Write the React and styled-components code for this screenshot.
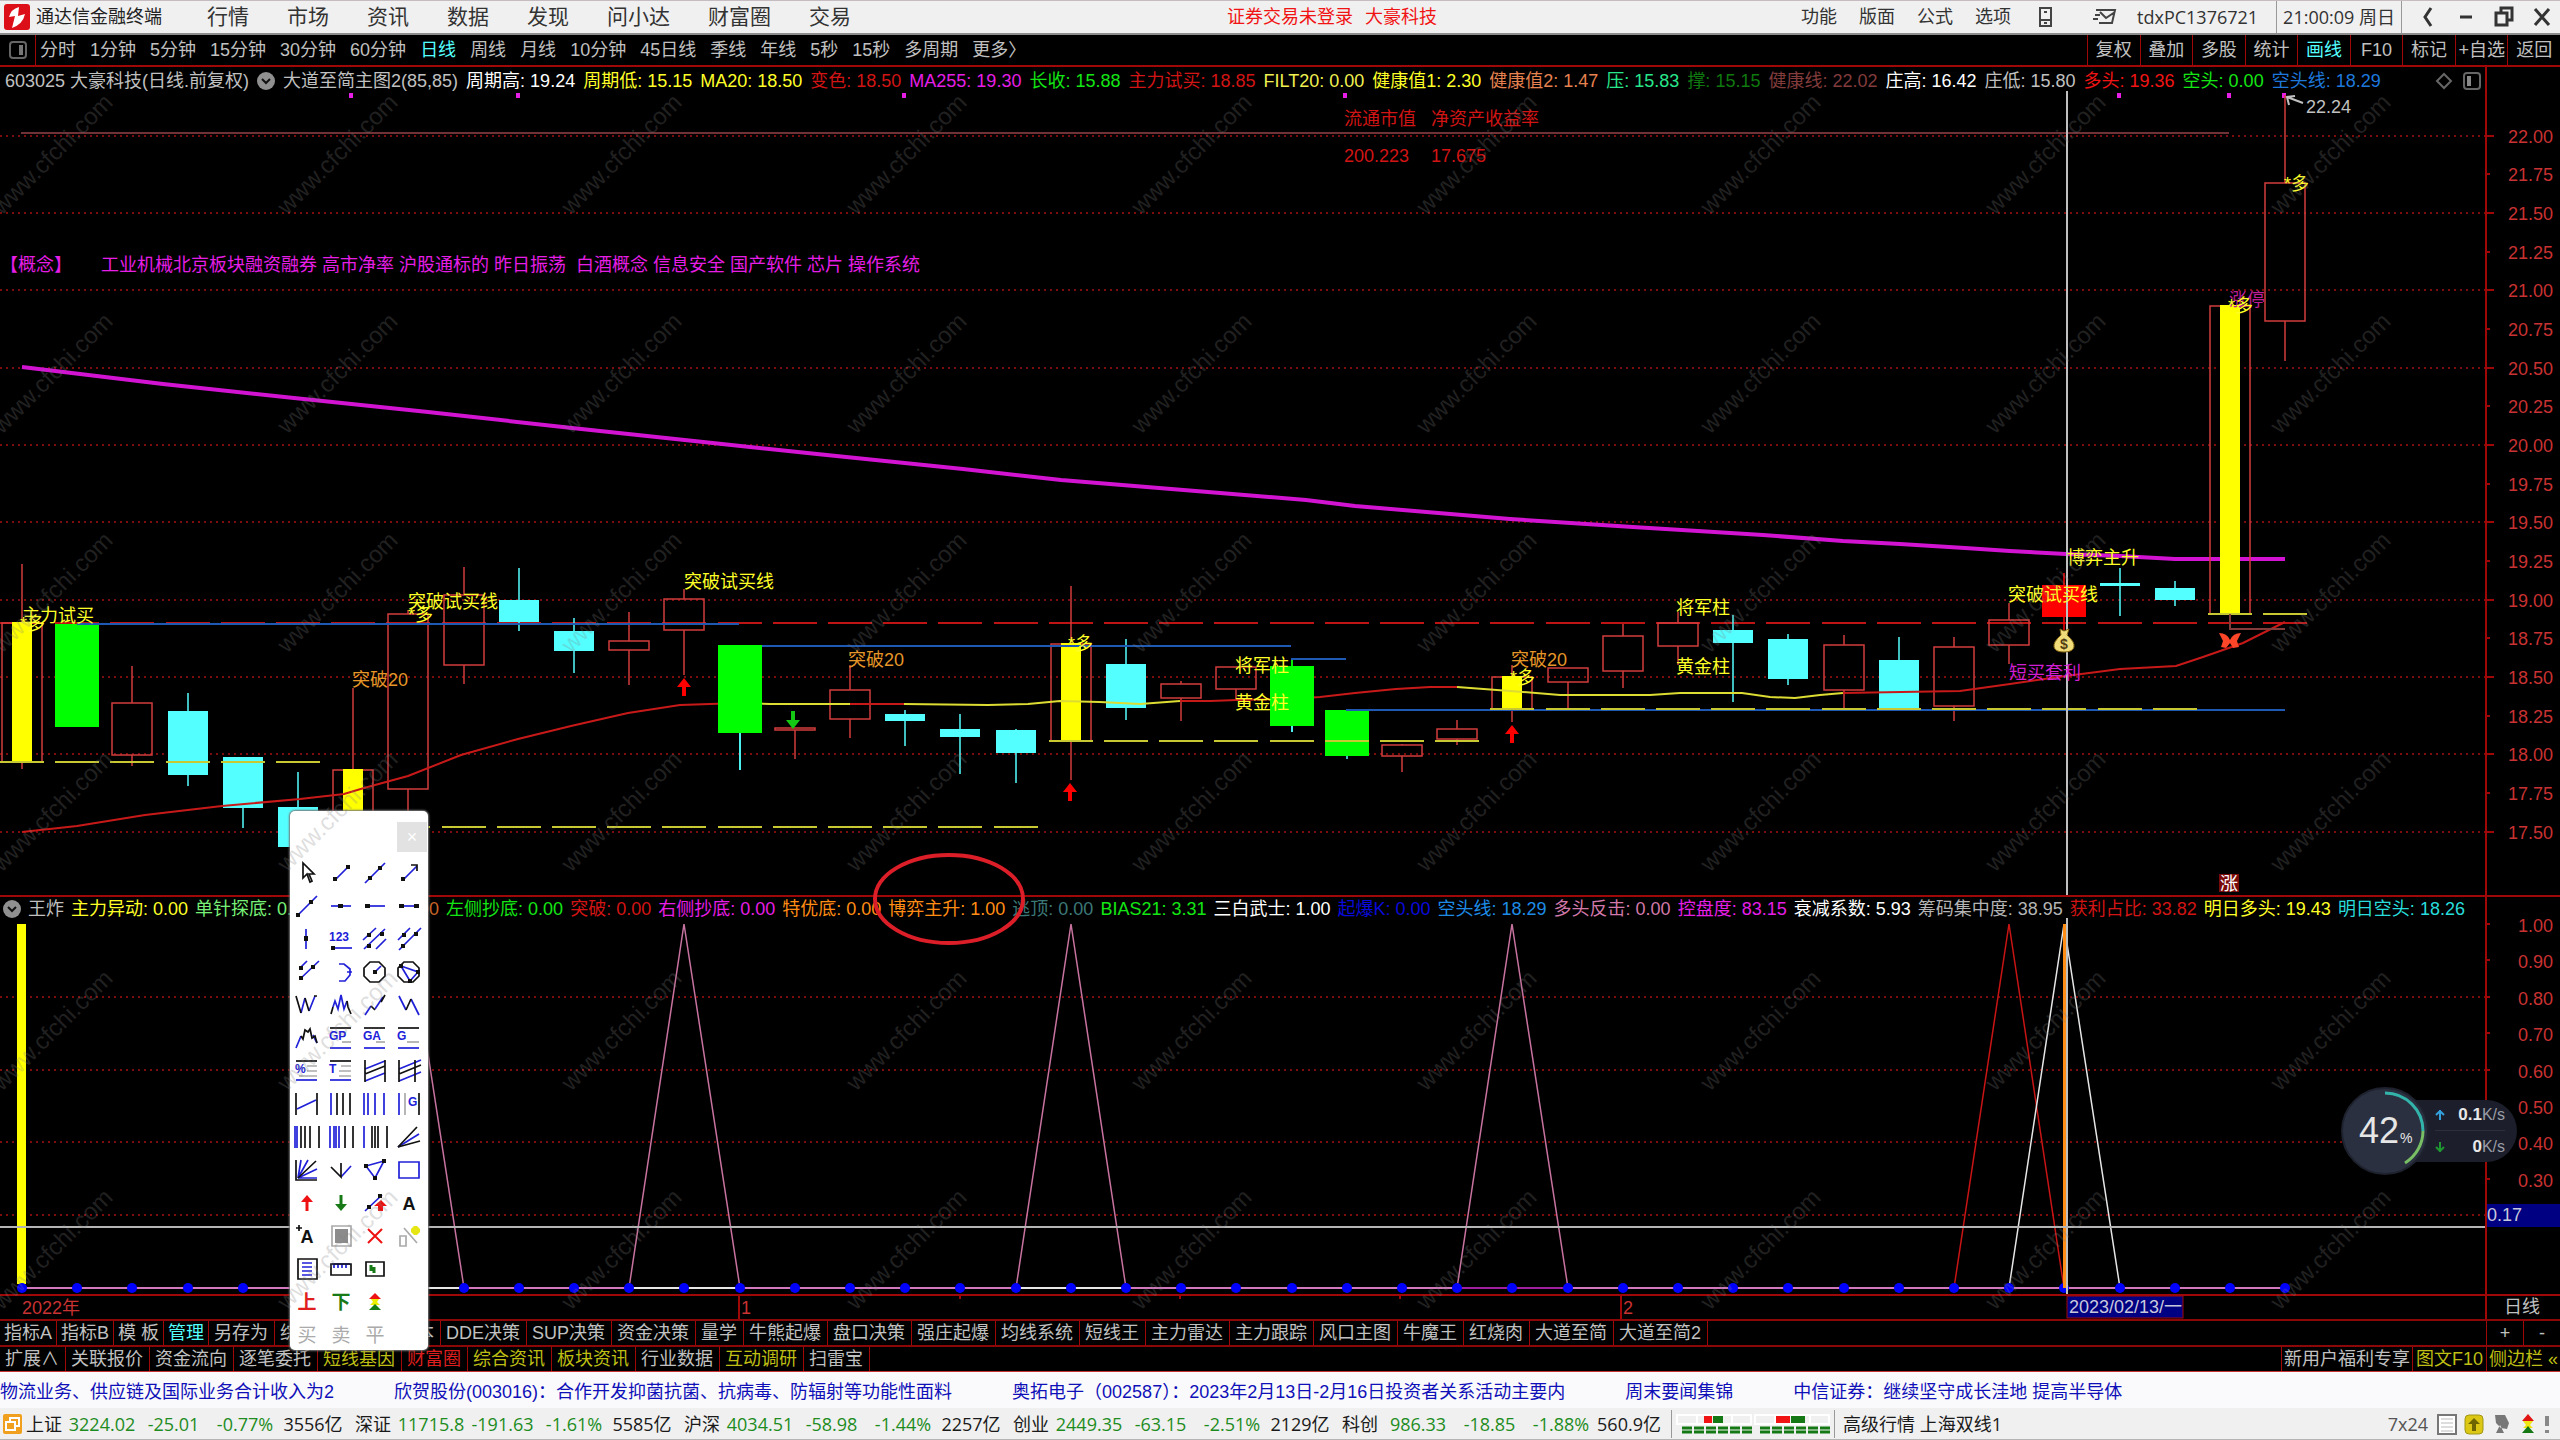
import { Fragment } from 'react';
import styled, { createGlobalStyle, css } from 'styled-components';

const GlobalStyle = createGlobalStyle`
  *, *::before, *::after {
    box-sizing: border-box;
  }

  body {
    margin: 0;
    background: #000;
    color: #c0c0c0;
    font-family: 'Liberation Sans', 'Noto Sans CJK SC', sans-serif;
    font-size: 18px;
    line-height: 24px;
  }

  button {
    padding: 0;
    border: 0;
    background: none;
    color: inherit;
    font: inherit;
    white-space: nowrap;
    cursor: pointer;
  }
`;

const Screen = styled.div`
  position: relative;
  display: flex;
  flex-direction: column;
  min-height: 100vh;
  overflow: hidden;
`;

/* ---------- title bar ---------- */

const TitleBar = styled.header`
  display: flex;
  align-items: center;
  justify-content: space-between;
  height: 35px;
  border-top: 1px solid #c4bcc0;
  border-bottom: 2px solid #8c8c8c;
  background: #f0f0f0;
  color: #333;
`;

const Brand = styled.div`
  display: flex;
  align-items: center;
  gap: 6px;
  width: 207px;
  padding-left: 4px;
  color: #222;
`;

const MainMenu = styled.nav`
  display: flex;
  align-items: center;
  gap: 38px;
  font-size: 21px;
`;

const TitleGroup = styled.div`
  display: flex;
  align-items: center;
  height: 100%;
`;

const LoginNotice = styled.div`
  display: flex;
  gap: 12px;
  padding-left: 12px;
  color: #f01414;
`;

const SystemMenu = styled.div`
  display: flex;
  align-items: center;
  gap: 22px;
`;

const Account = styled.span`
  display: flex;
  align-items: center;
  gap: 20px;
  padding: 0 18px 0 28px;
  font-family: 'Open Sans', 'Noto Sans CJK SC', sans-serif;
`;

const Clock = styled.time`
  height: 100%;
  padding: 4px 6px 0;
  border-left: 1px solid #999;
  border-right: 1px solid #999;
  font-family: 'Open Sans', 'Noto Sans CJK SC', sans-serif;
`;

const WindowButtons = styled.div`
  display: flex;
  align-items: center;
  gap: 18px;
  padding: 0 8px 0 16px;

  button {
    height: 24px;
  }

  svg {
    display: block;
  }
`;

/* ---------- toolbars ---------- */

const PeriodBar = styled.div`
  display: flex;
  justify-content: space-between;
  height: 32px;
  border-bottom: 2px solid #a00808;
`;

const Periods = styled.div`
  display: flex;
  align-items: center;
  gap: 14px;
`;

const LayoutButton = styled.button`
  display: flex;
  align-items: center;
  justify-content: center;
  width: 36px;
  height: 100%;
  margin-right: -10px;
  border-right: 1px solid #a00808;
`;

const TextButton = styled.button`
  color: ${({ $color }) => $color || 'inherit'};
`;

const Actions = styled.div`
  display: grid;
  grid-template-columns: repeat(9, 1fr);
  width: 473px;

  button {
    border-left: 1px solid #a00808;
  }
`;

/* ---------- indicator legends ---------- */

const Legend = styled.div`
  display: flex;
  height: ${({ $height }) => $height}px;
  border-top: ${({ $divider }) => ($divider ? '2px solid #a00808' : 0)};
`;

const LegendItems = styled.div`
  display: flex;
  flex: 1;
  align-items: center;
  gap: ${({ $gap }) => $gap}px;
  min-width: 0;
  padding-top: 3px;
  padding-left: ${({ $indent }) => $indent}px;
  white-space: pre;
`;

const LegendItem = styled.span`
  color: ${({ $color }) => $color};
  ${({ $slot }) =>
    $slot &&
    css`
      width: 120px;
      text-align: right;
    `}
`;

const LegendTools = styled.span`
  display: flex;
  align-items: center;
  gap: 10px;
  margin-left: auto;
  padding-right: 4px;
`;

const AxisCell = styled.div`
  width: 75px;
  border-left: 2px solid #a00808;
`;

const Chart = styled.svg`
  display: block;
  width: 100%;
  height: auto;
`;

/* ---------- tab rows ---------- */

const TabRow = styled.div`
  display: flex;
  justify-content: space-between;
  height: 26px;
  border-top: 2px solid #8c0808;
`;

const Tabs = styled.div`
  display: flex;
`;

const Tab = styled.button`
  padding: ${({ $tight }) => ($tight ? '0 4px' : '0 6px 0 5px')};
  border-right: 1px solid #a00808;
  color: ${({ $color }) => $color || '#c0c0c0'};
`;

const WideTab = styled(Tab)`
  display: flex;
  justify-content: space-between;
  width: 166px;
`;

const EdgeTab = styled(Tab)`
  min-width: ${({ $width }) => $width}px;
  padding: 0 2px;
  border-right: 0;
  border-left: 1px solid #a00808;
`;

/* ---------- news and status ---------- */

const News = styled.div`
  display: flex;
  gap: 60px;
  height: 37px;
  padding-top: 8px;
  overflow: hidden;
  border-top: 1px solid #c83232;
  background: #fafafc;
  white-space: pre;

  a {
    color: #1010b8;
    text-decoration: none;
  }
`;

const StatusBar = styled.footer`
  display: flex;
  flex: 1;
  align-items: center;
  min-height: 32px;
  padding-top: 1px;
  padding-left: 3px;
  border-bottom: 1px solid #b4b4b4;
  background: #f0f0f0;
  color: #1a1a1a;
  font-family: 'Open Sans', 'Noto Sans CJK SC', sans-serif;
`;

const Quote = styled.div`
  display: grid;
  grid-template-columns: 42px 68px 75px 68px 68px;
  margin-right: 8px;
  white-space: nowrap;
`;

const QuoteValue = styled.span`
  color: ${({ $plain }) => ($plain ? '#1a1a1a' : '#1e8c1e')};
  text-align: center;
`;

const Meters = styled.div`
  display: flex;
  align-items: center;
  height: 28px;
  padding: 0 4px;
  border-left: 1px solid #999;
  border-right: 1px solid #999;
`;

const Server = styled.span`
  padding-left: 8px;
`;

const Tray = styled.div`
  display: flex;
  align-items: center;
  gap: 8px;
  margin-left: auto;
  padding-right: 4px;
  color: #555;
`;

/* ---------- floating parts ---------- */

const Watermark = styled.svg`
  position: absolute;
  top: 67px;
  left: 0;
  width: 100%;
  height: 1260px;
  pointer-events: none;
`;

const Mark = styled.svg`
  position: absolute;
  top: 850px;
  left: 869px;
  pointer-events: none;
`;

const Palette = styled.section`
  position: absolute;
  top: 811px;
  left: 290px;
  width: 138px;
  height: 539px;
  border-radius: 5px;
  background: #fff;
  box-shadow: 0 0 2px 1px #777;
`;

const PaletteClose = styled.button`
  display: block;
  width: 30px;
  height: 30px;
  margin: 11px 1px 4px auto;
  background: #e2e2e2;
  color: #fff;
`;

const ToolGrid = styled.div`
  display: grid;
  grid-template-columns: repeat(4, 34px);
  grid-auto-rows: 33px;

  button {
    display: flex;
    align-items: center;
    justify-content: center;
  }
`;

const NetWidget = styled.div`
  position: absolute;
  top: 1087px;
  left: 2341px;
  display: flex;
  align-items: center;
`;

const Gauge = styled.div`
  position: relative;
  z-index: 1;
  width: 88px;
  height: 88px;
`;

const Rates = styled.div`
  width: 106px;
  height: 62px;
  margin-left: -18px;
  padding: 0 12px 0 24px;
  border-radius: 0 31px 31px 0;
  background: #1c1f2b;
`;

const Rate = styled.div`
  display: flex;
  align-items: center;
  justify-content: space-between;
  height: 31px;
  color: #e8e8e8;
  font-size: 17px;
  font-weight: bold;

  &:first-child {
    border-bottom: 1px solid #2c303c;
  }

  small {
    color: #9a9ca6;
    font-size: 16px;
    font-weight: normal;
  }
`;

const CYAN = '#54ffff';
const RED = '#c83232';
const MA_RED = '#c81919';
const FRAME = '#a00808';

const periods = ['分时', '1分钟', '5分钟', '15分钟', '30分钟', '60分钟', '日线', '周线', '月线', '10分钟', '45日线', '季线', '年线', '5秒', '15秒', '多周期', '更多〉'];
const actions = ['复权', '叠加', '多股', '统计', '画线', 'F10', '标记', '+自选', '返回'];

const mainLegend = [
  ['周期高: 19.24', '#fff'],
  ['周期低: 15.15', '#ffff28'],
  ['MA20: 18.50', '#ffff28'],
  ['变色: 18.50', '#d21414'],
  ['MA255: 19.30', '#e61ee6'],
  ['长收: 15.88', '#14e614'],
  ['主力试买: 18.85', '#d21414'],
  ['FILT20: 0.00', '#f0f050'],
  ['健康值1: 2.30', '#ffff28'],
  ['健康值2: 1.47', '#e68250'],
  ['压: 15.83', '#28e68c'],
  ['撑: 15.15', '#0f780f'],
  ['健康线: 22.02', '#823c3c'],
  ['庄高: 16.42', '#fff'],
  ['庄低: 15.80', '#c0c0c0'],
  ['多头: 19.36', '#f01414'],
  ['空头: 0.00', '#14e614'],
  ['空头线: 18.29', '#1e78dc'],
];

const subLegend = [
  ['王炸', '#c0c0c0'],
  ['主力异动: 0.00', '#ffff28'],
  ['单针探底: 0.00', '#78f078'],
  ['0.00', '#c86428', true],
  ['左侧抄底: 0.00', '#14e614'],
  ['突破: 0.00', '#d21414'],
  ['右侧抄底: 0.00', '#e61ee6'],
  ['特优底: 0.00', '#ff8c14'],
  ['博弈主升: 1.00', '#ff8c14'],
  ['逃顶: 0.00', '#3c7878'],
  ['BIAS21: 3.31', '#14e614'],
  ['三白武士: 1.00', '#fff'],
  ['起爆K: 0.00', '#0a0adc'],
  ['空头线: 18.29', '#1e8ce6'],
  ['多头反击: 0.00', '#d278aa'],
  ['控盘度: 83.15', '#e61ee6'],
  ['衰减系数: 5.93', '#fff'],
  ['筹码集中度: 38.95', '#b4b4b4'],
  ['获利占比: 33.82', '#d21414'],
  ['明日多头: 19.43', '#ffff28'],
  ['明日空头: 18.26', '#28dcdc'],
];

// kind, body top, body bottom, high, low
const candles = [
  ['y', 623, 762, 564, 769], ['g', 624, 727, 624, 727], ['h', 703, 755, 666, 766], ['c', 711, 775, 693, 786],
  ['c', 757, 808, 757, 828], ['c', 807, 847, 772, 847], ['y', 770, 880, 688, 890], ['h', 614, 789, 610, 830],
  ['h', 595, 665, 567, 684], ['c', 600, 622, 568, 631], ['c', 631, 651, 618, 673], ['h', 641, 650, 612, 685],
  ['h', 599, 630, 589, 675], ['g', 645, 733, 645, 770], ['h', 728, 730, 728, 759], ['h', 690, 719, 665, 738],
  ['c', 714, 721, 710, 746], ['c', 729, 737, 714, 774], ['c', 730, 753, 729, 783], ['y', 644, 741, 586, 780],
  ['c', 664, 708, 639, 720], ['h', 684, 698, 681, 721], ['h', 667, 689, 667, 700], ['g', 666, 726, 660, 732],
  ['g', 710, 756, 710, 759], ['h', 745, 756, 744, 772], ['h', 729, 739, 720, 745], ['y', 677, 709, 665, 722],
  ['h', 668, 682, 668, 708], ['h', 636, 671, 624, 688], ['h', 623, 646, 612, 665], ['c', 630, 643, 615, 702],
  ['c', 639, 679, 634, 685], ['h', 645, 690, 635, 708], ['c', 660, 709, 637, 709], ['h', 647, 706, 637, 721],
  ['h', 620, 645, 603, 664], ['r', 585, 617, 573, 630], ['c', 583, 586, 568, 616], ['c', 588, 600, 581, 606],
  ['y', 306, 614, 306, 628], ['h', 183, 321, 95, 361],
];

const colors = { c: CYAN, g: '#00ff00', r: '#ff0000', h: '#d23c3c', y: '#d23c3c' };
const candleX = (i) => Math.round(22 + 55.2 * i);
const priceY = (p) => Math.round(135.5 + (22 - p) * 154.7);
const levelY = (v) => Math.round(1288 - v * 364);

// level, first candle, last candle
const supports = [[762, 0, 5], [827, 7, 18], [741, 19, 26], [709, 27, 39], [614, 40, 41]];
const pressures = [[624, 77, 739], [646, 739, 1291], [659, 1291, 1346], [710, 1346, 2285]];

const labels = [
  ['主力试买', 22, 615], ['突破试买线', 408, 601], ['突破试买线', 684, 581], ['将军柱', 1235, 665],
  ['黄金柱', 1235, 702], ['将军柱', 1676, 607], ['黄金柱', 1676, 666], ['博弈主升', 2067, 557],
  ['突破试买线', 2008, 594], ['突破20', 352, 679, '#e69628'], ['突破20', 848, 659, '#e69628'],
  ['突破20', 1511, 659, '#e69628'], ['短买套利', 2009, 672, '#d21ed2'], ['涨停', 2229, 299, '#be1e96'],
  ['*多', 20, 623], ['*多', 408, 614], ['*多', 1068, 643], ['*多', 1510, 677], ['*多', 2228, 305], ['*多', 2284, 183],
  ['流通市值', 1344, 118, '#d21414'], ['净资产收益率', 1431, 118, '#d21414'],
  ['200.223', 1344, 155, '#d21414'], ['17.675', 1431, 155, '#d21414'], ['22.24', 2306, 106, '#c0c0c0'],
  ['【概念】', 0, 264, '#e61ee6'],
  ['工业机械北京板块融资融券 高市净率 沪股通标的 昨日振荡  白酒概念 信息安全 国产软件 芯片 操作系统', 101, 264, '#e61ee6'],
];

const ma255 = '22,367 163,384 294,398 428,412 572,428 694,441 817,454 963,469 1061,480 1208,492 1306,500 1355,506 1510,519 1633,527 1763,535 1843,541 1900,544 1965,548 2010,551 2066,554 2120,556 2175,559 2285,559';
const ma20 = [
  [MA_RED, '22,832 77,826 145,815 222,806 300,799 344,794 364,788 408,776 461,755 518,739 571,726 628,713 680,705 740,703'],
  ['#dcdc32', '740,703 770,704 850,704'],
  [MA_RED, '850,704 904,704'],
  ['#dcdc32', '904,704 988,705 1028,704 1060,701 1100,702 1140,704 1180,701'],
  [MA_RED, '1180,701 1210,701 1237,700 1290,699 1320,697 1355,693 1396,689 1430,687 1457,687'],
  ['#dcdc32', '1457,687 1510,691 1560,695 1650,695 1680,693 1742,693 1770,697 1795,698 1820,695 1843,693'],
  [MA_RED, '1843,693 1960,691 2010,684 2066,676 2120,669 2176,666 2203,657 2243,643 2285,622'],
];

const indicatorTabs = ['DDE决策', 'SUP决策', '资金决策', '量学', '牛熊起爆', '盘口决策', '强庄起爆', '均线系统', '短线王', '主力雷达', '主力跟踪', '风口主图', '牛魔王', '红烧肉', '大道至简', '大道至简2'];
const linkTabs = [
  ['扩展∧'], ['关联报价'], ['资金流向'], ['逐笔委托'], ['短线基因', '#bebe14'], ['财富圈', '#dc1e1e'],
  ['综合资讯', '#bebe14'], ['板块资讯', '#bebe14'], ['行业数据'], ['互动调研', '#bebe14'], ['扫雷宝'],
];

const news = [
  '物流业务、供应链及国际业务合计收入为2',
  '欣贺股份(003016)：合作开发抑菌抗菌、抗病毒、防辐射等功能性面料',
  '奥拓电子（002587）：2023年2月13日-2月16日投资者关系活动主要内',
  '周末要闻集锦',
  '中信证券：继续坚守成长洼地 提高半导体',
];

const quotes = [
  ['上证', '3224.02', '-25.01', '-0.77%', '3556亿'],
  ['深证', '11715.8', '-191.63', '-1.61%', '5585亿'],
  ['沪深', '4034.51', '-58.98', '-1.44%', '2257亿'],
  ['创业', '2449.35', '-63.15', '-2.51%', '2129亿'],
  ['科创', '986.33', '-18.85', '-1.88%', '560.9亿'],
];

// Drawing tools: k black, b blue, g gray, r red, n green strokes; dots are the anchor points
const tools = [
  { name: '选择', k: 'M8 2v15l4-4 3 8 2-1-3-7h5z' },
  { name: '线段', b: 'M6 19L19 6', dots: [[6, 18], [19, 6]] },
  { name: '直线', b: 'M2 22L22 2', dots: [[7, 17], [17, 7]] },
  { name: '箭头', b: 'M6 19L20 5', k: 'M14 4h6v6', dots: [[6, 18]] },
  { name: '射线', b: 'M2 22L22 2', dots: [[3, 21], [16, 8]] },
  { name: '水平直线', b: 'M2 12h20', dots: [[12, 12], [11, 12]] },
  { name: '水平射线', b: 'M4 12h18', dots: [[4, 12], [5, 12]] },
  { name: '水平线段', b: 'M4 12h16', dots: [[4, 12], [5, 12], [20, 12], [19, 12]] },
  { name: '垂直线', b: 'M11 2v20', dots: [[11, 12], [11, 11]] },
  { name: '价格标注', b: 'M3 21h20', text: '123', dots: [[4, 21]] },
  { name: '平行线', b: 'M0 13L13 1M1 22L22 2M13 22L23 12', dots: [[6, 8], [19, 7], [6, 19]] },
  { name: '平行直线', b: 'M1 13L13 1M2 23L24 1', dots: [[7, 8], [19, 7], [6, 19]] },
  { name: '平行射线', b: 'M5 8L12 1M5 19L24 1', dots: [[6, 8], [18, 7], [6, 18]] },
  { name: '圆弧', b: 'M10 4h5l6 5v6l-5 6h-6M18 12h5' },
  { name: '圆', k: 'M7 2h9l6 6v8l-6 6H7l-6-6V8z', b: 'M12 12l6-6', dots: [[12, 12]] },
  { name: '外接圆', k: 'M7 2h9l6 6v8l-6 6H7l-6-6V8z', b: 'M4 6l17 6-8 9z', dots: [[4, 6], [21, 12], [13, 21]] },
  { name: 'W底', b: 'M6 20L10 5M14 18L20 3', k: 'M1 3l5 17M10 5l4 13M19 3h3' },
  { name: '头肩', b: 'M4 14l2-6 3 8 3-14 3 14 3-8', k: 'M2 21l2-7M18 8l1 6 3 7' },
  { name: '波浪', b: 'M2 22l6-9M12 16l8-12', k: 'M8 13l4 4M18 9l4-7' },
  { name: '三浪', b: 'M2 3l7 14M14 6l8 16', k: 'M9 17l5-11' },
  { name: '八浪', b: 'M1 22l5-12M18 9l4 8', k: 'M6 10l2 3 2-9 3 2 2-3 2 9 3-2 2 7' },
  { name: '黄金价位', k: 'M1 2h21', g: 'M13 16h9', b: 'M1 22h21', text: 'GP' },
  { name: '黄金目标', k: 'M1 2h21', g: 'M13 16h9', b: 'M1 22h21', text: 'GA' },
  { name: '黄金分割', k: 'M1 2h21', g: 'M10 16h12', b: 'M1 22h21', text: 'G' },
  { name: '百分比', k: 'M1 2h21', g: 'M12 7h10M12 12h10M4 17h18', b: 'M1 21h21', text: '%' },
  { name: '波段线', k: 'M1 2h21', g: 'M12 7h10M10 12h12M10 17h12', b: 'M1 21h21', text: 'T' },
  { name: '线性回归带', k: 'M2 1v22M22 1v22M2 15L22 7', b: 'M2 10L22 2M2 22l20-8' },
  { name: '延长回归带', k: 'M2 1v22M18 1v22M2 15L24 6', b: 'M2 10L24 1M2 22l22-9' },
  { name: '回归线', k: 'M1 1v22M22 1v22', b: 'M2 17L21 8' },
  { name: '周期线', b: 'M2 1v22', k: 'M8 1v22M14 1v22M21 1v22' },
  { name: '斐波周期', b: 'M1 1v22M5 1v22M12 1v22M21 1v22' },
  { name: '江恩时间', b: 'M2 1v22', g: 'M8 1v22', k: 'M22 1v22', text: 'G', shift: 11 },
  { name: '阻速周期', b: 'M0 1v22M2 1v22', k: 'M6 1v22M10 1v22M15 1v22M24 1v22' },
  { name: '对称周期', b: 'M1 1v22M5 1v22M7 1v22M10 1v22', k: 'M16 1v22M24 1v22' },
  { name: '混合周期', b: 'M1 1v22', k: 'M9 1v22M12 1v22M15 1v22M24 1v22' },
  { name: '阻速线', b: 'M1 22L22 9', k: 'M1 22L20 2M1 22l22-6' },
  { name: '江恩角度', b: 'M3 20L6 2M3 20L13 2M3 20l19-9M3 20h19', k: 'M1 2v20h21M3 20L21 3' },
  { name: '三叉线', k: 'M2 9l10 10V5', b: 'M12 19L22 8' },
  { name: '三角形', b: 'M3 8l18-5-9 17z', dots: [[3, 8], [21, 3], [12, 20]] },
  { name: '矩形', b: 'M2 4h20v16H2z' },
  { name: '上箭头', r: 'M12 9v11', fill: ['#e11', 'M12 4l6 7H6z'] },
  { name: '下箭头', n: 'M12 4v11', fill: ['#177a17', 'M12 20l6-7H6z'] },
  { name: '涨跌线', b: 'M2 20L19 4', dots: [[6, 16], [17, 5]], fill: ['#e11', 'M11 15l7-6 6 6h-4v5h-5v-5z'] },
  { name: '文字', glyph: 'A' },
  { name: '加文字', glyph: 'A', k: 'M1 4h6M4 1v6' },
  { name: '隐藏', g: 'M3 2h19v20H3z', fill: ['#8c8c8c', 'M6 5h13v14H6z'] },
  { name: '删除', x: 'M5 5l14 14M19 5L5 19' },
  { name: '属性', g: 'M3 12h6v10H3zM7 4l13 15', fill: ['#e6e614', 'M14 5l3-3h3l3 3v3l-3 3h-3l-3-3z'] },
  { name: '列表', k: 'M3 2h19v20H3z', b: 'M7 6h10M7 10h10M7 14h10M7 18h10' },
  { name: '测距', k: 'M2 7h20v11H2z', b: 'M3 7h18M5 7v4M9 7v4M13 7v4M17 7v4' },
  { name: '画面', k: 'M3 5h18v14H3z', n: 'M8 8v6M11 10v6' },
  null,
  { name: '上', glyph: '上', ink: '#e11e1e', bold: true },
  { name: '下', glyph: '下', ink: '#177a17', bold: true },
  { name: '红绿灯', fill: ['#e11', 'M12 3l6 6H6z'], fill2: ['#ee0', 'M8 9h8l-2 3 3 3H7l3-3z'], fill3: ['#177a17', 'M12 14l6 6H6z'] },
  null,
  { name: '买', glyph: '买', ink: '#aaa' },
  { name: '卖', glyph: '卖', ink: '#aaa' },
  { name: '平', glyph: '平', ink: '#aaa' },
];

const Dropdown = () => (
  <svg width="18" height="18" viewBox="0 0 18 18">
    <circle cx="9" cy="9" r="9" fill="#909090" />
    <path d="M5 7l4 4 4-4" fill="none" stroke="#111" strokeWidth="2" />
  </svg>
);

function ToolIcon({ tool }) {
  const { k, b, g, r, n, x: cross, text, dots = [], fill, fill2, fill3, glyph, ink = '#111', bold, shift = 0 } = tool;
  return (
    <svg width="24" height="24" viewBox="0 0 24 24" fill="none" overflow="visible">
      {[fill, fill2, fill3].filter(Boolean).map(([color, d]) => (
        <path key={d} d={d} fill={color} />
      ))}
      {g && <path d={g} stroke="#aaa" strokeWidth="1.7" />}
      {b && <path d={b} stroke="#2020d8" strokeWidth="1.7" />}
      {k && <path d={k} stroke="#111" strokeWidth="1.7" />}
      {cross && <path d={cross} stroke="#e11" strokeWidth="2" />}
      {r && <path d={r} stroke="#e11" strokeWidth="3" />}
      {n && <path d={n} stroke="#177a17" strokeWidth="3" />}
      {dots.map(([x, y]) => (
        <rect key={`${x}-${y}`} x={x - 2} y={y - 2} width="4" height="4" fill="#111" />
      ))}
      {text && (
        <text x={shift} y="14" fill="#2020d8" fontSize="12" fontWeight="700">
          {text}
        </text>
      )}
      {glyph && (
        <text x="12" y="19" fill={ink} fontSize={glyph === 'A' ? 18 : 19} fontWeight={glyph === 'A' || bold ? 700 : 400} textAnchor="middle">
          {glyph}
        </text>
      )}
    </svg>
  );
}

function Candle({ index, data }) {
  const [kind, top, bottom, high, low] = data;
  const x = candleX(index);
  const color = colors[kind];
  const hollow = kind === 'h' || kind === 'y';
  const half = hollow || kind === 'c' ? 20 : 22;
  return (
    <g>
      {high < top && <path d={`M${x} ${high}V${top}`} stroke={color} strokeWidth="1.5" />}
      {low > bottom && <path d={`M${x} ${bottom}V${low}`} stroke={kind === 'g' ? CYAN : color} strokeWidth="1.5" />}
      <rect
        x={x - half}
        y={top}
        width={half * 2}
        height={bottom - top}
        fill={hollow ? 'none' : color}
        stroke={hollow ? color : 'none'}
        strokeWidth="1.5"
      />
      {kind === 'y' && <rect x={x - 10} y={top - 1} width="20" height={bottom - top + 1} fill="#ffff00" />}
    </g>
  );
}

function PriceChart() {
  const prices = Array.from({ length: 19 }, (_, i) => 22 - i * 0.25);
  return (
    <Chart viewBox="0 91 2560 804" fontSize="18">
      {prices.map((price, i) => (
        <Fragment key={price}>
          {i % 2 === 0 && <path d={`M0 ${priceY(price)}H2485`} stroke="#7d0c0c" strokeWidth="2" strokeDasharray="2 4" />}
          <path d={`M2486 ${priceY(price)}h${i % 2 ? 4 : 8}`} stroke={FRAME} strokeWidth="2" />
          <text x="2553" y={priceY(price) + 7} fill={RED} textAnchor="end">
            {price.toFixed(2)}
          </text>
        </Fragment>
      ))}
      <path d="M2486 91V895" stroke={FRAME} strokeWidth="2" />
      <path d="M21 133H2229" stroke="#6e3237" strokeWidth="2" />
      {[351, 518, 904, 1345, 2119, 2229, 2284].map((x) => (
        <rect key={x} x={x - 2} y="93" width="4" height="5" fill="#e61ee6" />
      ))}
      {candles.map((c, i) => (
        <path key={i} d={`M${candleX(i) - 22} 623h44`} stroke="#be1414" strokeWidth="2" />
      ))}
      <polyline points={ma255} fill="none" stroke="#d214d2" strokeWidth="4" />
      {candles.map((c, i) => (
        <Candle key={i} index={i} data={c} />
      ))}
      {pressures.map(([y, from, to]) => (
        <path key={y} d={`M${from} ${y}H${to}`} stroke="#1e5ab4" strokeWidth="2" />
      ))}
      {supports.map(([y, first, last]) =>
        candles.slice(first, last + 1).map((c, i) => (
          <path key={`${y}-${i}`} d={`M${candleX(first + i) - 22} ${y}h44`} stroke="#c8c832" strokeWidth="2" />
        )),
      )}
      {ma20.map(([color, points]) => (
        <polyline key={points} points={points} fill="none" stroke={color} strokeWidth="2" />
      ))}
      {/* the MA20 line passes behind these two bars */}
      {[13, 23].map((i) => (
        <Candle key={i} index={i} data={candles[i]} />
      ))}
      <path d="M2230 614V629H2285" fill="none" stroke="#823c3c" strokeWidth="2" />
      <path d="M2067 91V895" stroke="#c0c0c0" strokeWidth="2" />
      {[[684, 678], [1070, 783], [1512, 725]].map(([x, y]) => (
        <path key={x} d={`M${x} ${y}l7 9h-5v9h-4v-9h-5z`} fill="#ff0000" />
      ))}
      <path d="M793 729l7-9h-5v-9h-4v9h-5z" fill="#14c814" />
      {/* money bag */}
      <g>
        <path d="M2060 629l4 2 5-2-2 6q8 7 7 12t-10 5-10-5 7-12z" fill="#f0dc78" stroke="#826414" />
        <text x="2064" y="649" fill="#503c14" fontSize="14" fontWeight="700" textAnchor="middle">
          $
        </text>
      </g>
      <path d="M2219 633q8 0 11 7 3-7 11-7l-4 8 2 6-6 1-3-5-4 5-5-1 2-6z" fill="#ff4628" />
      <path d="M2303 103l-16-6m8-1l-8 1 2 8" fill="none" stroke="#c0c0c0" strokeWidth="2" />
      {labels.map(([text, x, y, color = '#ffff28']) => (
        <text key={`${text}${x}`} x={x} y={y + 7} fill={color} xmlSpace="preserve">
          {text}
        </text>
      ))}
      <rect x="2219" y="874" width="20" height="18" fill="#780a0a" />
      <text x="2229" y="890" fill="#fff" textAnchor="middle">
        涨
      </text>
    </Chart>
  );
}

function SignalChart() {
  const peak = (i) => `M${candleX(i - 1)} 1288L${candleX(i)} 924L${candleX(i + 1)} 1288`;
  return (
    <Chart viewBox="0 918 2560 401" fontSize="18">
      {[0.8, 0.6, 0.4, 0.2].map((v) => (
        <path key={v} d={`M0 ${levelY(v)}H2485`} stroke="#7d0c0c" strokeWidth="2" strokeDasharray="2 4" />
      ))}
      {[1, 0.9, 0.8, 0.7, 0.6, 0.5, 0.4, 0.3].map((v) => (
        <Fragment key={v}>
          <path d={`M2486 ${levelY(v)}h4`} stroke={FRAME} strokeWidth="2" />
          <text x="2553" y={levelY(v) + 8} fill={RED} textAnchor="end">
            {v.toFixed(2)}
          </text>
        </Fragment>
      ))}
      <rect x="17" y="924" width="9" height="360" fill="#ffff00" />
      <path d={[7, 12, 19, 27].map(peak).join('')} fill="none" stroke="#c8739f" strokeWidth="1.5" />
      <path d={peak(36)} fill="none" stroke="#c81414" strokeWidth="1.5" />
      <path d={peak(37)} fill="none" stroke="#e6e6e6" strokeWidth="1.5" />
      <path d="M22 1288H2285" stroke="#d278be" strokeWidth="2" />
      <path d="M408 1288H464M629 1288H739M1016 1288H1126" stroke="#e6e6e6" strokeWidth="2" />
      <path d="M1457 1288H1568" stroke="#a01ea0" strokeWidth="2" />
      {candles.map((c, i) => (
        <circle key={i} cx={candleX(i)} cy="1288" r="5" fill="#0000ff" />
      ))}
      <path d="M2065 924V1288" stroke="#ff8c14" strokeWidth="4" />
      <path d="M2067 918V1295" stroke="#c0c0c0" strokeWidth="2" />
      <path d="M0 1227H2485" stroke="#b4b4b4" strokeWidth="2" />
      <path d="M2486 918V1319M0 1295H2560" stroke={FRAME} strokeWidth="2" />
      <path d="M739 1295v24M1621 1295v24M960 1295v4M1180 1295v4M1400 1295v4" stroke={FRAME} strokeWidth="2" />
      <rect x="2487" y="1204" width="73" height="23" fill="#000082" />
      <text x="2487" y="1221" fill="#c8c8dc">0.17</text>
      <text x="22" y="1314" fill={RED}>2022年</text>
      <text x="741" y="1314" fill={RED}>1</text>
      <text x="1623" y="1314" fill={RED}>2</text>
      <rect x="2067" y="1296" width="116" height="22" fill="#000082" stroke={FRAME} />
      <text x="2069" y="1313" fill="#c8c8dc">2023/02/13/一</text>
      <text x="2540" y="1313" fill="#c0c0c0" textAnchor="end">日线</text>
    </Chart>
  );
}

function Meter({ x, red, green }) {
  return (
    <g transform={`translate(${x} 0)`}>
      <path d="M0 1h74v9H0zM20 1v9M55 1v9" fill="none" stroke="#fff" strokeWidth="2" />
      <rect x={red[0]} y="2" width={red[1]} height="7" fill="#f01414" />
      <rect x={green[0]} y="2" width={green[1]} height="7" fill="#147814" />
      {[5, 17, 29, 41, 53, 65].map((left) => (
        <path key={left} d={`M${left} 14h10M${left} 18h10`} stroke="#147814" strokeWidth="3" />
      ))}
    </g>
  );
}

function App() {
  return (
    <Screen>
      <GlobalStyle />
      <TitleBar>
        <TitleGroup>
          <Brand>
            <svg width="26" height="26" viewBox="0 0 26 26">
              <rect width="26" height="26" rx="3" fill="#dc0f19" />
              <path d="M15 3q-8 2-10 10l6-1-3 12q11-4 13-14l-7 2z" fill="#fff" />
            </svg>
            通达信金融终端
          </Brand>
          <MainMenu>
            {['行情', '市场', '资讯', '数据', '发现', '问小达', '财富圈', '交易'].map((item) => (
              <TextButton key={item}>{item}</TextButton>
            ))}
          </MainMenu>
        </TitleGroup>
        <LoginNotice>
          <span>证券交易未登录</span>
          <span>大豪科技</span>
        </LoginNotice>
        <TitleGroup>
          <SystemMenu>
            {['功能', '版面', '公式', '选项'].map((item) => (
              <TextButton key={item}>{item}</TextButton>
            ))}
          </SystemMenu>
          <Account>
            <svg width="78" height="22" viewBox="0 0 78 22" fill="none" stroke="#444" strokeWidth="2">
              <path d="M2 2h11v18H2zM2 14h11M6 6h3M6 17h3" transform="translate(-1 0)" />
              <path d="M57 4h19l-3 13H60M56 9h5M54 13h5M61 6l6 6 9-6" />
            </svg>
            tdxPC1376721
          </Account>
          <Clock>21:00:09 周日</Clock>
          <WindowButtons>
            {[
              ['返回', 'M13 3L7 12l6 9'],
              ['最小化', 'M4 12h12'],
              ['还原', 'M2 8h11v12H2zM7 8V3h11v12h-5'],
              ['关闭', 'M3 4l14 16M17 4L3 20'],
            ].map(([name, d]) => (
              <button key={name} aria-label={name}>
                <svg width="20" height="24" viewBox="0 0 20 24" fill="none" stroke="#333" strokeWidth="3">
                  <path d={d} />
                </svg>
              </button>
            ))}
          </WindowButtons>
        </TitleGroup>
      </TitleBar>

      <PeriodBar>
        <Periods>
          <LayoutButton aria-label="布局">
            <svg width="18" height="18" viewBox="0 0 18 18">
              <rect x="1" y="1" width="16" height="16" rx="3" fill="none" stroke="#666" strokeWidth="2" />
              <rect x="10" y="4" width="4" height="10" fill="#777" />
            </svg>
          </LayoutButton>
          {periods.map((item) => (
            <TextButton key={item} $color={item === '日线' && CYAN}>
              {item}
            </TextButton>
          ))}
        </Periods>
        <Actions>
          {actions.map((item) => (
            <TextButton key={item} $color={item === '画线' && CYAN}>
              {item}
            </TextButton>
          ))}
        </Actions>
      </PeriodBar>

      <Legend $height={24}>
        <LegendItems $indent={5} $gap={8}>
          <span>603025 大豪科技(日线.前复权)</span>
          <Dropdown />
          <span>大道至简主图2(85,85)</span>
          {mainLegend.map(([text, color]) => (
            <LegendItem key={text} $color={color}>
              {text}
            </LegendItem>
          ))}
          <LegendTools>
            <svg width="18" height="18" viewBox="0 0 18 18" fill="none" stroke="#666" strokeWidth="2">
              <path d="M9 2l7 7-7 7-7-7z" />
            </svg>
            <svg width="18" height="18" viewBox="0 0 18 18">
              <rect x="1" y="1" width="16" height="16" rx="3" fill="none" stroke="#666" strokeWidth="2" />
              <rect x="4" y="4" width="4" height="10" fill="#888" />
            </svg>
          </LegendTools>
        </LegendItems>
        <AxisCell />
      </Legend>
      <PriceChart />
      <Legend $height={23} $divider>
        <LegendItems $indent={3} $gap={7}>
          <Dropdown />
          {subLegend.map(([text, color, slot]) => (
            <LegendItem key={text} $color={color} $slot={slot}>
              {text}
            </LegendItem>
          ))}
        </LegendItems>
        <AxisCell />
      </Legend>
      <SignalChart />

      <TabRow>
        <Tabs>
          <Tab $tight>指标A</Tab>
          <Tab $tight>指标B</Tab>
          <Tab $tight>模 板</Tab>
          <Tab $tight $color={CYAN}>管理</Tab>
          <Tab>另存为</Tab>
          <WideTab>
            <span>综合</span>
            <span>版本</span>
          </WideTab>
          {indicatorTabs.map((item) => (
            <Tab key={item}>{item}</Tab>
          ))}
        </Tabs>
        <Tabs>
          <EdgeTab $width={37}>+</EdgeTab>
          <EdgeTab $width={37}>-</EdgeTab>
        </Tabs>
      </TabRow>
      <TabRow>
        <Tabs>
          {linkTabs.map(([item, color]) => (
            <Tab key={item} $color={color}>
              {item}
            </Tab>
          ))}
        </Tabs>
        <Tabs>
          <EdgeTab $width={130}>新用户福利专享</EdgeTab>
          <EdgeTab $width={74} $color="#bebe14">图文F10</EdgeTab>
          <EdgeTab $width={74} $color="#bebe14">侧边栏 «</EdgeTab>
        </Tabs>
      </TabRow>

      <News>
        {news.map((item) => (
          <a key={item} href="#news">
            {item}
          </a>
        ))}
      </News>

      <StatusBar>
        <svg width="23" height="20" viewBox="0 0 23 20">
          <rect width="19" height="20" rx="2" fill="#f0a01e" />
          <path d="M3 8h9v8H3zM7 8V4h9v8h-4" fill="none" stroke="#fff" strokeWidth="2" />
        </svg>
        {quotes.map(([name, ...values]) => (
          <Quote key={name}>
            <span>{name}</span>
            {values.map((value, i) => (
              <QuoteValue key={value} $plain={i === 3}>
                {value}
              </QuoteValue>
            ))}
          </Quote>
        ))}
        <Meters>
          <svg width="154" height="20" viewBox="0 0 154 20">
            <Meter x={1} red={[27, 8]} green={[36, 10]} />
            <Meter x={79} red={[21, 14]} green={[36, 14]} />
          </svg>
        </Meters>
        <Server>高级行情 上海双线1</Server>
        <Tray>
          7x24
          <svg width="120" height="22" viewBox="0 0 120 22">
            <path d="M2 2h18v19H2z" fill="#fff" stroke="#777" strokeWidth="2" />
            <path d="M5 6h12M5 10h12M5 14h12M5 18h12" stroke="#bbb" />
            <rect x="29" y="2" width="18" height="19" rx="4" fill="#dcc814" stroke="#a09614" />
            <path d="M38 5l6 6h-4v7h-4v-7h-4z" fill="#6e6400" />
            <path d="M59 2h10l4 8-2 6-6-1-5-5zM64 12l-4 8h8" fill="#777" />
            <path d="M92 1l6 7H86z" fill="#e11414" />
            <path d="M87 8h10l-3 4 3 3H87l3-3z" fill="#f0e614" />
            <path d="M92 13l6 7H86z" fill="#147814" />
            <path d="M111 3v10M111 17v3" stroke="#888" strokeWidth="4" />
          </svg>
        </Tray>
      </StatusBar>

      <Palette>
        <PaletteClose aria-label="关闭">×</PaletteClose>
        <ToolGrid>
          {tools.map((tool, i) =>
            tool ? (
              <button key={tool.name} aria-label={tool.name}>
                <ToolIcon tool={tool} />
              </button>
            ) : (
              <span key={i} />
            ),
          )}
        </ToolGrid>
      </Palette>

      <NetWidget>
        <Gauge>
          <svg width="88" height="88" viewBox="0 0 88 88">
            <circle cx="44" cy="44" r="43" fill="#2b3040" stroke="#1e222e" strokeWidth="2" />
            <path d="M44 6A38 38 0 0 1 82 44" fill="none" stroke="#32b4aa" strokeWidth="3" />
            <path d="M82 44A38 38 0 0 1 64 76" fill="none" stroke="#78be64" strokeWidth="3" />
            <text x="18" y="56" fill="#e6e6e6" fontSize="36">42</text>
            <text x="59" y="56" fill="#e6e6e6" fontSize="14">%</text>
          </svg>
        </Gauge>
        <Rates>
          <Rate>
            <svg width="10" height="10" viewBox="0 0 10 10">
              <path d="M5 0v10M1 5l4-4 4 4" fill="none" stroke="#32a0dc" strokeWidth="2" />
            </svg>
            <span>
              0.1<small>K/s</small>
            </span>
          </Rate>
          <Rate>
            <svg width="10" height="10" viewBox="0 0 10 10">
              <path d="M5 0v10M1 5l4 4 4-4" fill="none" stroke="#1e9632" strokeWidth="2" />
            </svg>
            <span>
              0<small>K/s</small>
            </span>
          </Rate>
        </Rates>
      </NetWidget>

      <Watermark>
        {Array.from({ length: 54 }, (_, i) => {
          const x = Math.round(2 + 284.7 * (i % 9));
          const y = 149 + 219 * Math.floor(i / 9);
          return (
            <text key={i} x={x} y={y} transform={`rotate(-45 ${x} ${y})`} fill="#808080" fillOpacity="0.27" fontSize="24">
              www.cfchi.com
            </text>
          );
        })}
      </Watermark>
      <Mark width="160" height="98" viewBox="0 0 160 98">
        <ellipse cx="80" cy="49" rx="74" ry="44" fill="none" stroke="#dc1e28" strokeWidth="4" />
      </Mark>
    </Screen>
  );
}

export default App;
